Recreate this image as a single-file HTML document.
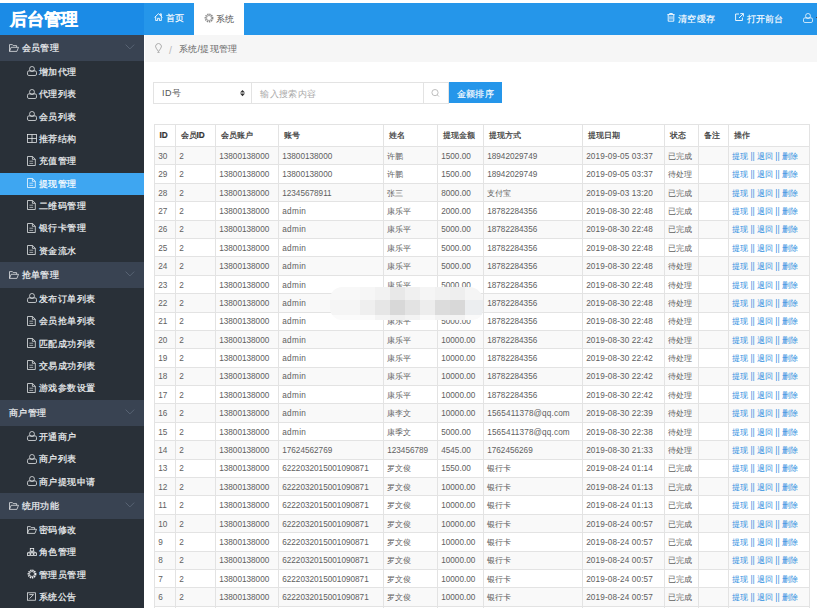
<!DOCTYPE html>
<html><head><meta charset="utf-8"><style>
*{box-sizing:border-box;margin:0;padding:0}
html,body{width:817px;height:608px;overflow:hidden;background:#fff;font-family:"Liberation Sans",sans-serif;}
.a{position:absolute;line-height:0}
.t{position:absolute;white-space:nowrap;line-height:12px}
#logo{position:absolute;left:0;top:3px;width:144px;height:32px;background:#1b8be6;color:#fff;font-weight:bold;font-size:17px;line-height:34px;padding-left:9.5px;-webkit-text-stroke:0.4px #fff}
#bar{position:absolute;left:144px;top:3px;width:673px;height:32px;background:#2596ea}
.hw{color:#fff;font-size:9px;letter-spacing:0.2px;-webkit-text-stroke:0.15px #fff}
#side{position:absolute;left:0;top:35px;width:144px;height:573px;background:#293038}
.sh{position:absolute;left:0;width:144px;height:26px;background:#394352;color:#eef0f2;-webkit-text-stroke:0.2px #eef0f2;font-size:9px;letter-spacing:0.4px}
.sh .ic{position:absolute;left:8.8px;top:8.6px;line-height:0;color:#e8eaec}
.st{position:absolute;top:0;line-height:26px}
.chev{position:absolute;left:124.7px;top:8.8px;line-height:0}
.si{position:absolute;left:0;width:144px;height:22.33px;color:#eef0f2;-webkit-text-stroke:0.2px #eef0f2;font-size:9px;letter-spacing:0.45px}
.si.act{background:#3ea6f1;color:#fff;-webkit-text-stroke:0.2px #fff}
.si .ic2{position:absolute;line-height:0}
.st2{position:absolute;left:39px;top:0;line-height:22.33px;white-space:nowrap}
#crumb{position:absolute;left:145px;top:35px;width:672px;height:26.8px;background:#f6f6f6;color:#666;font-size:9px;line-height:26px;letter-spacing:0.3px}
#sel{position:absolute;left:153px;top:82px;width:99px;height:22px;border:1px solid #e3e3e3;font-size:9px;color:#555;line-height:21px;padding-left:8px;letter-spacing:0.6px}
#inp{position:absolute;left:252px;top:82px;width:172px;height:22px;border:1px solid #e3e3e3;border-left:none;font-size:9px;letter-spacing:0.35px;color:#aaa;line-height:22px;padding-left:8.3px}
#sbtn{position:absolute;left:423px;top:82px;width:26px;height:22px;border:1px solid #e3e3e3}
#obtn{position:absolute;left:449px;top:82px;width:53px;height:21px;background:#2596ea;color:#fff;font-size:9px;line-height:24px;text-align:center;letter-spacing:0.3px;-webkit-text-stroke:0.15px #fff}
#tbl{position:absolute;left:154px;top:124px;border-collapse:collapse;table-layout:fixed;font-size:8.2px;color:#606060}
#tbl th,#tbl td{border:1px solid #e3e3e3;text-align:left;padding:0 0 0 4.5px;white-space:nowrap;overflow:hidden}
#tbl td{padding:1.2px 0 0 3.2px}
#tbl th{height:22px;color:#333;font-weight:normal;-webkit-text-stroke:0.2px #333}
#tbl td{height:18.4px}
#tbl tbody tr:nth-child(odd){background:#f9f9f9}
.op{color:#2e8ee0}
#mos{position:absolute;left:330px;top:287.3px;width:153px;height:32.5px;border-radius:12px 14px 10px 12px;overflow:hidden;filter:blur(0.6px)}
</style></head><body>
<div id="logo">后台管理</div>
<div id="bar"></div>
<div class="a" style="left:154px;top:13px;color:#fff"><svg width="9" height="8" viewBox="0 0 9 8"><path d="M0.6 4.4 L4.5 0.7 L8.4 4.4 M6.3 2.4 V0.8 H7.3 V3.3 M1.7 3.6 V7.6 H3.6 V5.3 H5.4 V7.6 H7.3 V3.6" fill="none" stroke="currentColor" stroke-width="0.9"/></svg></div>
<div class="t hw" style="left:166px;top:12.2px">首页</div>
<div style="position:absolute;left:194px;top:3px;width:49.5px;height:32px;background:#fff"></div>
<div class="a" style="left:203.5px;top:12.8px;color:#8a8a8a"><svg width="10" height="10" viewBox="0 0 10 10"><circle cx="5" cy="5" r="3.6" stroke="currentColor" fill="none" stroke-width="1.7" stroke-dasharray="1.4 0.7"/><circle cx="5" cy="5" r="2.5" stroke="currentColor" fill="none" stroke-width="0.7"/></svg></div>
<div class="t" style="left:215.8px;top:12.6px;font-size:9px;color:#555;letter-spacing:0.2px">系统</div>
<div class="a" style="left:667px;top:13px;color:#fff"><svg width="8" height="9" viewBox="0 0 8 9"><path d="M0.4 1.6 H7.6 M2.6 1.6 V0.5 H5.4 V1.6 M1.2 1.6 V8.2 H6.8 V1.6 M3 3.2 V6.6 M5 3.2 V6.6" fill="none" stroke="currentColor" stroke-width="0.9"/></svg></div>
<div class="t hw" style="left:678.2px;top:12.8px">清空缓存</div>
<div class="a" style="left:735px;top:13.3px;color:#fff"><svg width="9" height="8" viewBox="0 0 9 8"><path d="M4 1 H0.6 V7.5 H7.4 V4.6 M5.3 0.6 H8.4 V3.6 M8.3 0.7 L4 5" fill="none" stroke="currentColor" stroke-width="0.9"/></svg></div>
<div class="t hw" style="left:746.7px;top:12.8px">打开前台</div>
<div class="a" style="left:803px;top:13px;color:#fff"><svg width="10" height="10" viewBox="0 0 10 10"><rect x="2.6" y="0.5" width="4.8" height="5" rx="2.3" stroke="currentColor" fill="none" stroke-width="0.75"/><rect x="0.5" y="4.9" width="9" height="4.6" rx="1.4" stroke="currentColor" fill="none" stroke-width="0.75"/></svg></div>
<div style="position:absolute;left:815.5px;top:16.8px;width:2px;height:1.5px;background:#445"></div>
<div id="side"></div>
<div class="sh" style="top:35px"><span class="ic"><svg width="10" height="8" viewBox="0 0 10 8"><path d="M0.5 7.4 V0.6 H3.4 L4.2 1.6 H7.6 V3.3 M0.5 7.4 L2.1 3.3 H9.5 L7.9 7.4 Z" stroke="currentColor" fill="none" stroke-width="0.75" stroke-linejoin="round"/></svg></span><span class="st" style="left:21.5px">会员管理</span><span class="chev"><svg width="10" height="6" viewBox="0 0 10 6"><path d="M0.6 0.6 L4.9 4.9 L9.2 0.6" fill="none" stroke="#5b6677" stroke-width="0.9"/></svg></span></div><div class="si" style="top:61.00px"><span class="ic2" style="left:26.8px;top:5.3px"><svg width="10" height="10" viewBox="0 0 10 10"><rect x="2.6" y="0.5" width="4.8" height="5" rx="2.3" stroke="currentColor" fill="none" stroke-width="0.75"/><rect x="0.5" y="4.9" width="9" height="4.6" rx="1.4" stroke="currentColor" fill="none" stroke-width="0.75"/></svg></span><span class="st2">增加代理</span></div><div class="si" style="top:83.33px"><span class="ic2" style="left:26.8px;top:5.3px"><svg width="10" height="10" viewBox="0 0 10 10"><rect x="2.6" y="0.5" width="4.8" height="5" rx="2.3" stroke="currentColor" fill="none" stroke-width="0.75"/><rect x="0.5" y="4.9" width="9" height="4.6" rx="1.4" stroke="currentColor" fill="none" stroke-width="0.75"/></svg></span><span class="st2">代理列表</span></div><div class="si" style="top:105.66px"><span class="ic2" style="left:26.8px;top:5.3px"><svg width="10" height="10" viewBox="0 0 10 10"><rect x="2.6" y="0.5" width="4.8" height="5" rx="2.3" stroke="currentColor" fill="none" stroke-width="0.75"/><rect x="0.5" y="4.9" width="9" height="4.6" rx="1.4" stroke="currentColor" fill="none" stroke-width="0.75"/></svg></span><span class="st2">会员列表</span></div><div class="si" style="top:127.99px"><span class="ic2" style="left:26.9px;top:5.9px"><svg width="10" height="9" viewBox="0 0 10 9"><rect x="0.5" y="0.5" width="9" height="8" stroke="currentColor" fill="none" stroke-width="0.75"/><path d="M5 0.5 V8.5 M0.5 4.5 H9.5" stroke="currentColor" stroke-width="0.75"/></svg></span><span class="st2">推荐结构</span></div><div class="si" style="top:150.32px"><span class="ic2" style="left:27px;top:5.5px"><svg width="9" height="10" viewBox="0 0 9 10"><path d="M0.5 0.5 H5.6 L8.3 3.2 V9.5 H0.5 Z M5.4 0.6 V3.3 H8.2" stroke="currentColor" fill="none" stroke-width="0.75"/><path d="M2.4 5.2 H6.2 M2.4 7.4 H6.2" stroke="currentColor" stroke-width="0.75" opacity="0.8"/></svg></span><span class="st2">充值管理</span></div><div class="si act" style="top:172.65px"><span class="ic2" style="left:27px;top:5.5px"><svg width="9" height="10" viewBox="0 0 9 10"><path d="M0.5 0.5 H5.6 L8.3 3.2 V9.5 H0.5 Z M5.4 0.6 V3.3 H8.2" stroke="currentColor" fill="none" stroke-width="0.75"/><path d="M2.4 5.2 H6.2 M2.4 7.4 H6.2" stroke="currentColor" stroke-width="0.75" opacity="0.8"/></svg></span><span class="st2">提现管理</span></div><div class="si" style="top:194.98px"><span class="ic2" style="left:27px;top:5.5px"><svg width="9" height="10" viewBox="0 0 9 10"><path d="M0.5 0.5 H5.6 L8.3 3.2 V9.5 H0.5 Z M5.4 0.6 V3.3 H8.2" stroke="currentColor" fill="none" stroke-width="0.75"/><path d="M2.4 5.2 H6.2 M2.4 7.4 H6.2" stroke="currentColor" stroke-width="0.75" opacity="0.8"/></svg></span><span class="st2">二维码管理</span></div><div class="si" style="top:217.31px"><span class="ic2" style="left:27px;top:5.5px"><svg width="9" height="10" viewBox="0 0 9 10"><path d="M0.5 0.5 H5.6 L8.3 3.2 V9.5 H0.5 Z M5.4 0.6 V3.3 H8.2" stroke="currentColor" fill="none" stroke-width="0.75"/><path d="M2.4 5.2 H6.2 M2.4 7.4 H6.2" stroke="currentColor" stroke-width="0.75" opacity="0.8"/></svg></span><span class="st2">银行卡管理</span></div><div class="si" style="top:239.64px"><span class="ic2" style="left:27px;top:5.5px"><svg width="9" height="10" viewBox="0 0 9 10"><path d="M0.5 0.5 H5.6 L8.3 3.2 V9.5 H0.5 Z M5.4 0.6 V3.3 H8.2" stroke="currentColor" fill="none" stroke-width="0.75"/><path d="M2.4 5.2 H6.2 M2.4 7.4 H6.2" stroke="currentColor" stroke-width="0.75" opacity="0.8"/></svg></span><span class="st2">资金流水</span></div><div class="sh" style="top:262px"><span class="ic"><svg width="10" height="8" viewBox="0 0 10 8"><path d="M0.5 7.4 V0.6 H3.4 L4.2 1.6 H7.6 V3.3 M0.5 7.4 L2.1 3.3 H9.5 L7.9 7.4 Z" stroke="currentColor" fill="none" stroke-width="0.75" stroke-linejoin="round"/></svg></span><span class="st" style="left:21.5px">抢单管理</span><span class="chev"><svg width="10" height="6" viewBox="0 0 10 6"><path d="M0.6 0.6 L4.9 4.9 L9.2 0.6" fill="none" stroke="#5b6677" stroke-width="0.9"/></svg></span></div><div class="si" style="top:288.00px"><span class="ic2" style="left:26.8px;top:5.3px"><svg width="10" height="10" viewBox="0 0 10 10"><rect x="2.6" y="0.5" width="4.8" height="5" rx="2.3" stroke="currentColor" fill="none" stroke-width="0.75"/><rect x="0.5" y="4.9" width="9" height="4.6" rx="1.4" stroke="currentColor" fill="none" stroke-width="0.75"/></svg></span><span class="st2">发布订单列表</span></div><div class="si" style="top:310.33px"><span class="ic2" style="left:27px;top:5.5px"><svg width="9" height="10" viewBox="0 0 9 10"><path d="M0.5 0.5 H5.6 L8.3 3.2 V9.5 H0.5 Z M5.4 0.6 V3.3 H8.2" stroke="currentColor" fill="none" stroke-width="0.75"/><path d="M2.4 5.2 H6.2 M2.4 7.4 H6.2" stroke="currentColor" stroke-width="0.75" opacity="0.8"/></svg></span><span class="st2">会员抢单列表</span></div><div class="si" style="top:332.66px"><span class="ic2" style="left:27px;top:5.5px"><svg width="9" height="10" viewBox="0 0 9 10"><path d="M0.5 0.5 H5.6 L8.3 3.2 V9.5 H0.5 Z M5.4 0.6 V3.3 H8.2" stroke="currentColor" fill="none" stroke-width="0.75"/><path d="M2.4 5.2 H6.2 M2.4 7.4 H6.2" stroke="currentColor" stroke-width="0.75" opacity="0.8"/></svg></span><span class="st2">匹配成功列表</span></div><div class="si" style="top:354.99px"><span class="ic2" style="left:27px;top:5.5px"><svg width="9" height="10" viewBox="0 0 9 10"><path d="M0.5 0.5 H5.6 L8.3 3.2 V9.5 H0.5 Z M5.4 0.6 V3.3 H8.2" stroke="currentColor" fill="none" stroke-width="0.75"/><path d="M2.4 5.2 H6.2 M2.4 7.4 H6.2" stroke="currentColor" stroke-width="0.75" opacity="0.8"/></svg></span><span class="st2">交易成功列表</span></div><div class="si" style="top:377.32px"><span class="ic2" style="left:27px;top:5.5px"><svg width="9" height="10" viewBox="0 0 9 10"><path d="M0.5 0.5 H5.6 L8.3 3.2 V9.5 H0.5 Z M5.4 0.6 V3.3 H8.2" stroke="currentColor" fill="none" stroke-width="0.75"/><path d="M2.4 5.2 H6.2 M2.4 7.4 H6.2" stroke="currentColor" stroke-width="0.75" opacity="0.8"/></svg></span><span class="st2">游戏参数设置</span></div><div class="sh" style="top:400px"><span class="st" style="left:9px">商户管理</span><span class="chev"><svg width="10" height="6" viewBox="0 0 10 6"><path d="M0.6 0.6 L4.9 4.9 L9.2 0.6" fill="none" stroke="#5b6677" stroke-width="0.9"/></svg></span></div><div class="si" style="top:426.00px"><span class="ic2" style="left:26.8px;top:5.3px"><svg width="10" height="10" viewBox="0 0 10 10"><rect x="2.6" y="0.5" width="4.8" height="5" rx="2.3" stroke="currentColor" fill="none" stroke-width="0.75"/><rect x="0.5" y="4.9" width="9" height="4.6" rx="1.4" stroke="currentColor" fill="none" stroke-width="0.75"/></svg></span><span class="st2">开通商户</span></div><div class="si" style="top:448.33px"><span class="ic2" style="left:26.8px;top:5.3px"><svg width="10" height="10" viewBox="0 0 10 10"><rect x="2.6" y="0.5" width="4.8" height="5" rx="2.3" stroke="currentColor" fill="none" stroke-width="0.75"/><rect x="0.5" y="4.9" width="9" height="4.6" rx="1.4" stroke="currentColor" fill="none" stroke-width="0.75"/></svg></span><span class="st2">商户列表</span></div><div class="si" style="top:470.66px"><span class="ic2" style="left:26.8px;top:5.3px"><svg width="10" height="10" viewBox="0 0 10 10"><rect x="2.6" y="0.5" width="4.8" height="5" rx="2.3" stroke="currentColor" fill="none" stroke-width="0.75"/><rect x="0.5" y="4.9" width="9" height="4.6" rx="1.4" stroke="currentColor" fill="none" stroke-width="0.75"/></svg></span><span class="st2">商户提现申请</span></div><div class="sh" style="top:493px"><span class="ic"><svg width="10" height="8" viewBox="0 0 10 8"><path d="M0.5 7.4 V0.6 H3.4 L4.2 1.6 H7.6 V3.3 M0.5 7.4 L2.1 3.3 H9.5 L7.9 7.4 Z" stroke="currentColor" fill="none" stroke-width="0.75" stroke-linejoin="round"/></svg></span><span class="st" style="left:21.5px">统用功能</span><span class="chev"><svg width="10" height="6" viewBox="0 0 10 6"><path d="M0.6 0.6 L4.9 4.9 L9.2 0.6" fill="none" stroke="#5b6677" stroke-width="0.9"/></svg></span></div><div class="si" style="top:519.00px"><span class="ic2" style="left:26.8px;top:6.8px"><svg width="10" height="8" viewBox="0 0 10 8"><path d="M0.5 7.4 V0.6 H3.4 L4.2 1.6 H7.6 V3.3 M0.5 7.4 L2.1 3.3 H9.5 L7.9 7.4 Z" stroke="currentColor" fill="none" stroke-width="0.75" stroke-linejoin="round"/></svg></span><span class="st2">密码修改</span></div><div class="si" style="top:541.33px"><span class="ic2" style="left:27px;top:6.3px"><svg width="10" height="8" viewBox="0 0 10 8"><rect x="3.3" y="0.5" width="3.4" height="2.6" stroke="currentColor" fill="none" stroke-width="0.8"/><rect x="0.5" y="4.9" width="2.6" height="2.6" stroke="currentColor" fill="none" stroke-width="0.8"/><rect x="3.7" y="4.9" width="2.6" height="2.6" stroke="currentColor" fill="none" stroke-width="0.8"/><rect x="6.9" y="4.9" width="2.6" height="2.6" stroke="currentColor" fill="none" stroke-width="0.8"/><path d="M1.8 4.9 V4 H8.2 V4.9 M5 3.1 V4.9" stroke="currentColor" fill="none" stroke-width="0.7"/></svg></span><span class="st2">角色管理</span></div><div class="si" style="top:563.66px"><span class="ic2" style="left:26.6px;top:5.0px"><svg width="10" height="10" viewBox="0 0 10 10"><circle cx="5" cy="5" r="3.6" stroke="currentColor" fill="none" stroke-width="1.7" stroke-dasharray="1.4 0.7"/><circle cx="5" cy="5" r="2.5" stroke="currentColor" fill="none" stroke-width="0.7"/></svg></span><span class="st2">管理员管理</span></div><div class="si" style="top:585.99px"><span class="ic2" style="left:27px;top:6.2px"><svg width="9" height="9" viewBox="0 0 9 9"><rect x="0.5" y="0.8" width="8" height="7.4" stroke="currentColor" fill="none" stroke-width="0.75"/><path d="M2.3 2.6 H6.6 M2.5 6.6 L6.5 2.6" stroke="currentColor" fill="none" stroke-width="0.8"/></svg></span><span class="st2">系统公告</span></div>
<div id="crumb"><span class="a" style="left:10px;top:8px"><svg width="7" height="10" viewBox="0 0 7 10"><path d="M3.5 8.6 L1.2 5.2 A2.9 2.9 0 1 1 5.8 5.2 Z M2.4 9.4 H4.6" fill="none" stroke="#999" stroke-width="0.8"/></svg></span><span style="position:absolute;left:24px;top:2px;color:#bbb;font-size:10.5px">/</span><span style="position:absolute;left:34px;top:1px">系统/提现管理</span></div>
<div id="sel">ID号<span class="a" style="left:85.5px;top:6.7px"><svg width="5" height="7" viewBox="0 0 5 7"><path d="M2.5 0 L5 2.6 H0 Z M2.5 6.2 L5 3.6 H0 Z" fill="#333"/></svg></span></div>
<div id="inp">输入搜索内容</div>
<div id="sbtn"><svg style="position:absolute;left:7px;top:6px" width="10" height="8" viewBox="0 0 10 8"><circle cx="4" cy="3.6" r="3.1" fill="none" stroke="#b8b8b8" stroke-width="0.9"/><path d="M6.3 5.9 L8 7.6" stroke="#b8b8b8" stroke-width="0.9"/></svg></div>
<div id="obtn">金额排序</div>
<table id="tbl"><thead><tr><th style="width:21.0px"><b>ID</b></th><th style="width:40.0px">会员<b>ID</b></th><th style="width:63.0px">会员账户</th><th style="width:105.0px">账号</th><th style="width:54.0px">姓名</th><th style="width:46.0px">提现金额</th><th style="width:99.0px">提现方式</th><th style="width:82.0px">提现日期</th><th style="width:34.0px">状态</th><th style="width:30.0px">备注</th><th style="width:81.0px">操作</th></tr></thead><tbody><tr><td>30</td><td>2</td><td>13800138000</td><td>13800138000</td><td>许鹏</td><td>1500.00</td><td>18942029749</td><td><span style="letter-spacing:0.13px">2019-09-05 03:37</span></td><td>已完成</td><td></td><td><span class="op">提现 || 退回 || 删除</span></td></tr><tr><td>29</td><td>2</td><td>13800138000</td><td>13800138000</td><td>许鹏</td><td>1500.00</td><td>18942029749</td><td><span style="letter-spacing:0.13px">2019-09-05 03:37</span></td><td>待处理</td><td></td><td><span class="op">提现 || 退回 || 删除</span></td></tr><tr><td>28</td><td>2</td><td>13800138000</td><td>12345678911</td><td>张三</td><td>8000.00</td><td>支付宝</td><td><span style="letter-spacing:0.13px">2019-09-03 13:20</span></td><td>已完成</td><td></td><td><span class="op">提现 || 退回 || 删除</span></td></tr><tr><td>27</td><td>2</td><td>13800138000</td><td><span style="letter-spacing:0.35px">admin</span></td><td>康乐平</td><td>2000.00</td><td>18782284356</td><td><span style="letter-spacing:0.13px">2019-08-30 22:48</span></td><td>已完成</td><td></td><td><span class="op">提现 || 退回 || 删除</span></td></tr><tr><td>26</td><td>2</td><td>13800138000</td><td><span style="letter-spacing:0.35px">admin</span></td><td>康乐平</td><td>5000.00</td><td>18782284356</td><td><span style="letter-spacing:0.13px">2019-08-30 22:48</span></td><td>已完成</td><td></td><td><span class="op">提现 || 退回 || 删除</span></td></tr><tr><td>25</td><td>2</td><td>13800138000</td><td><span style="letter-spacing:0.35px">admin</span></td><td>康乐平</td><td>5000.00</td><td>18782284356</td><td><span style="letter-spacing:0.13px">2019-08-30 22:48</span></td><td>已完成</td><td></td><td><span class="op">提现 || 退回 || 删除</span></td></tr><tr><td>24</td><td>2</td><td>13800138000</td><td><span style="letter-spacing:0.35px">admin</span></td><td>康乐平</td><td>5000.00</td><td>18782284356</td><td><span style="letter-spacing:0.13px">2019-08-30 22:48</span></td><td>待处理</td><td></td><td><span class="op">提现 || 退回 || 删除</span></td></tr><tr><td>23</td><td>2</td><td>13800138000</td><td><span style="letter-spacing:0.35px">admin</span></td><td>康乐平</td><td>5000.00</td><td>18782284356</td><td><span style="letter-spacing:0.13px">2019-08-30 22:48</span></td><td>待处理</td><td></td><td><span class="op">提现 || 退回 || 删除</span></td></tr><tr><td>22</td><td>2</td><td>13800138000</td><td><span style="letter-spacing:0.35px">admin</span></td><td>康乐平</td><td>5000.00</td><td>18782284356</td><td><span style="letter-spacing:0.13px">2019-08-30 22:48</span></td><td>待处理</td><td></td><td><span class="op">提现 || 退回 || 删除</span></td></tr><tr><td>21</td><td>2</td><td>13800138000</td><td><span style="letter-spacing:0.35px">admin</span></td><td>康乐平</td><td>5000.00</td><td>18782284356</td><td><span style="letter-spacing:0.13px">2019-08-30 22:48</span></td><td>待处理</td><td></td><td><span class="op">提现 || 退回 || 删除</span></td></tr><tr><td>20</td><td>2</td><td>13800138000</td><td><span style="letter-spacing:0.35px">admin</span></td><td>康乐平</td><td>10000.00</td><td>18782284356</td><td><span style="letter-spacing:0.13px">2019-08-30 22:42</span></td><td>待处理</td><td></td><td><span class="op">提现 || 退回 || 删除</span></td></tr><tr><td>19</td><td>2</td><td>13800138000</td><td><span style="letter-spacing:0.35px">admin</span></td><td>康乐平</td><td>10000.00</td><td>18782284356</td><td><span style="letter-spacing:0.13px">2019-08-30 22:42</span></td><td>待处理</td><td></td><td><span class="op">提现 || 退回 || 删除</span></td></tr><tr><td>18</td><td>2</td><td>13800138000</td><td><span style="letter-spacing:0.35px">admin</span></td><td>康乐平</td><td>10000.00</td><td>18782284356</td><td><span style="letter-spacing:0.13px">2019-08-30 22:42</span></td><td>待处理</td><td></td><td><span class="op">提现 || 退回 || 删除</span></td></tr><tr><td>17</td><td>2</td><td>13800138000</td><td><span style="letter-spacing:0.35px">admin</span></td><td>康乐平</td><td>10000.00</td><td>18782284356</td><td><span style="letter-spacing:0.13px">2019-08-30 22:42</span></td><td>待处理</td><td></td><td><span class="op">提现 || 退回 || 删除</span></td></tr><tr><td>16</td><td>2</td><td>13800138000</td><td><span style="letter-spacing:0.35px">admin</span></td><td>康李文</td><td>10000.00</td><td><span style="letter-spacing:0.15px">1565411378@qq.com</span></td><td><span style="letter-spacing:0.13px">2019-08-30 22:39</span></td><td>待处理</td><td></td><td><span class="op">提现 || 退回 || 删除</span></td></tr><tr><td>15</td><td>2</td><td>13800138000</td><td><span style="letter-spacing:0.35px">admin</span></td><td>康季文</td><td>5000.00</td><td><span style="letter-spacing:0.15px">1565411378@qq.com</span></td><td><span style="letter-spacing:0.13px">2019-08-30 22:38</span></td><td>待处理</td><td></td><td><span class="op">提现 || 退回 || 删除</span></td></tr><tr><td>14</td><td>2</td><td>13800138000</td><td>17624562769</td><td>123456789</td><td>4545.00</td><td>1762456269</td><td><span style="letter-spacing:0.13px">2019-08-30 21:33</span></td><td>待处理</td><td></td><td><span class="op">提现 || 退回 || 删除</span></td></tr><tr><td>13</td><td>2</td><td>13800138000</td><td>6222032015001090871</td><td>罗文俊</td><td>1550.00</td><td>银行卡</td><td><span style="letter-spacing:0.13px">2019-08-24 01:14</span></td><td>已完成</td><td></td><td><span class="op">提现 || 退回 || 删除</span></td></tr><tr><td>12</td><td>2</td><td>13800138000</td><td>6222032015001090871</td><td>罗文俊</td><td>10000.00</td><td>银行卡</td><td><span style="letter-spacing:0.13px">2019-08-24 01:13</span></td><td>已完成</td><td></td><td><span class="op">提现 || 退回 || 删除</span></td></tr><tr><td>11</td><td>2</td><td>13800138000</td><td>6222032015001090871</td><td>罗文俊</td><td>10000.00</td><td>银行卡</td><td><span style="letter-spacing:0.13px">2019-08-24 01:13</span></td><td>已完成</td><td></td><td><span class="op">提现 || 退回 || 删除</span></td></tr><tr><td>10</td><td>2</td><td>13800138000</td><td>6222032015001090871</td><td>罗文俊</td><td>10000.00</td><td>银行卡</td><td><span style="letter-spacing:0.13px">2019-08-24 00:57</span></td><td>已完成</td><td></td><td><span class="op">提现 || 退回 || 删除</span></td></tr><tr><td>9</td><td>2</td><td>13800138000</td><td>6222032015001090871</td><td>罗文俊</td><td>10000.00</td><td>银行卡</td><td><span style="letter-spacing:0.13px">2019-08-24 00:57</span></td><td>已完成</td><td></td><td><span class="op">提现 || 退回 || 删除</span></td></tr><tr><td>8</td><td>2</td><td>13800138000</td><td>6222032015001090871</td><td>罗文俊</td><td>10000.00</td><td>银行卡</td><td><span style="letter-spacing:0.13px">2019-08-24 00:57</span></td><td>已完成</td><td></td><td><span class="op">提现 || 退回 || 删除</span></td></tr><tr><td>7</td><td>2</td><td>13800138000</td><td>6222032015001090871</td><td>罗文俊</td><td>10000.00</td><td>银行卡</td><td><span style="letter-spacing:0.13px">2019-08-24 00:57</span></td><td>已完成</td><td></td><td><span class="op">提现 || 退回 || 删除</span></td></tr><tr><td>6</td><td>2</td><td>13800138000</td><td>6222032015001090871</td><td>罗文俊</td><td>10000.00</td><td>银行卡</td><td><span style="letter-spacing:0.13px">2019-08-24 00:57</span></td><td>已完成</td><td></td><td><span class="op">提现 || 退回 || 删除</span></td></tr><tr><td>5</td><td>2</td><td>13800138000</td><td>6222032015001090871</td><td>罗文俊</td><td>10000.00</td><td>银行卡</td><td><span style="letter-spacing:0.13px">2019-08-24 00:57</span></td><td>已完成</td><td></td><td><span class="op">提现 || 退回 || 删除</span></td></tr></tbody></table>
<div id="mos"><div style="position:absolute;left:0px;top:-1.3000000000000114px;width:30px;height:14px;background:#f8f8f8"></div><div style="position:absolute;left:30px;top:-1.3000000000000114px;width:15px;height:14px;background:#f6f6f6"></div><div style="position:absolute;left:45px;top:-1.3000000000000114px;width:15px;height:14px;background:#f2f2f2"></div><div style="position:absolute;left:60px;top:-1.3000000000000114px;width:15px;height:14px;background:#e8e8e8"></div><div style="position:absolute;left:75px;top:-1.3000000000000114px;width:15px;height:14px;background:#f0f0f0"></div><div style="position:absolute;left:90px;top:-1.3000000000000114px;width:15px;height:14px;background:#f5f5f5"></div><div style="position:absolute;left:105px;top:-1.3000000000000114px;width:15px;height:14px;background:#f1f1f1"></div><div style="position:absolute;left:120px;top:-1.3000000000000114px;width:15px;height:14px;background:#eeeeee"></div><div style="position:absolute;left:135px;top:-1.3000000000000114px;width:18px;height:14px;background:#f5f5f5"></div><div style="position:absolute;left:0px;top:12.699999999999989px;width:30px;height:15px;background:#f5f5f5"></div><div style="position:absolute;left:30px;top:12.699999999999989px;width:15px;height:15px;background:#efefef"></div><div style="position:absolute;left:45px;top:12.699999999999989px;width:15px;height:15px;background:#e6e6e6"></div><div style="position:absolute;left:60px;top:12.699999999999989px;width:15px;height:15px;background:#d8d8d8"></div><div style="position:absolute;left:75px;top:12.699999999999989px;width:15px;height:15px;background:#e3e3e3"></div><div style="position:absolute;left:90px;top:12.699999999999989px;width:15px;height:15px;background:#ededed"></div><div style="position:absolute;left:105px;top:12.699999999999989px;width:15px;height:15px;background:#dcdcdc"></div><div style="position:absolute;left:120px;top:12.699999999999989px;width:15px;height:15px;background:#d8d8d8"></div><div style="position:absolute;left:135px;top:12.699999999999989px;width:18px;height:15px;background:#eceef0"></div><div style="position:absolute;left:0px;top:27.69999999999999px;width:45px;height:4.800000000000011px;background:#fbfbfb"></div><div style="position:absolute;left:45px;top:27.69999999999999px;width:15px;height:4.800000000000011px;background:#f4f4f4"></div><div style="position:absolute;left:60px;top:27.69999999999999px;width:15px;height:4.800000000000011px;background:#efefef"></div><div style="position:absolute;left:75px;top:27.69999999999999px;width:15px;height:4.800000000000011px;background:#f3f3f3"></div><div style="position:absolute;left:90px;top:27.69999999999999px;width:15px;height:4.800000000000011px;background:#fafafa"></div><div style="position:absolute;left:105px;top:27.69999999999999px;width:15px;height:4.800000000000011px;background:#f3f3f3"></div><div style="position:absolute;left:120px;top:27.69999999999999px;width:15px;height:4.800000000000011px;background:#f3f3f3"></div><div style="position:absolute;left:135px;top:27.69999999999999px;width:18px;height:4.800000000000011px;background:#fafafa"></div></div>
</body></html>
